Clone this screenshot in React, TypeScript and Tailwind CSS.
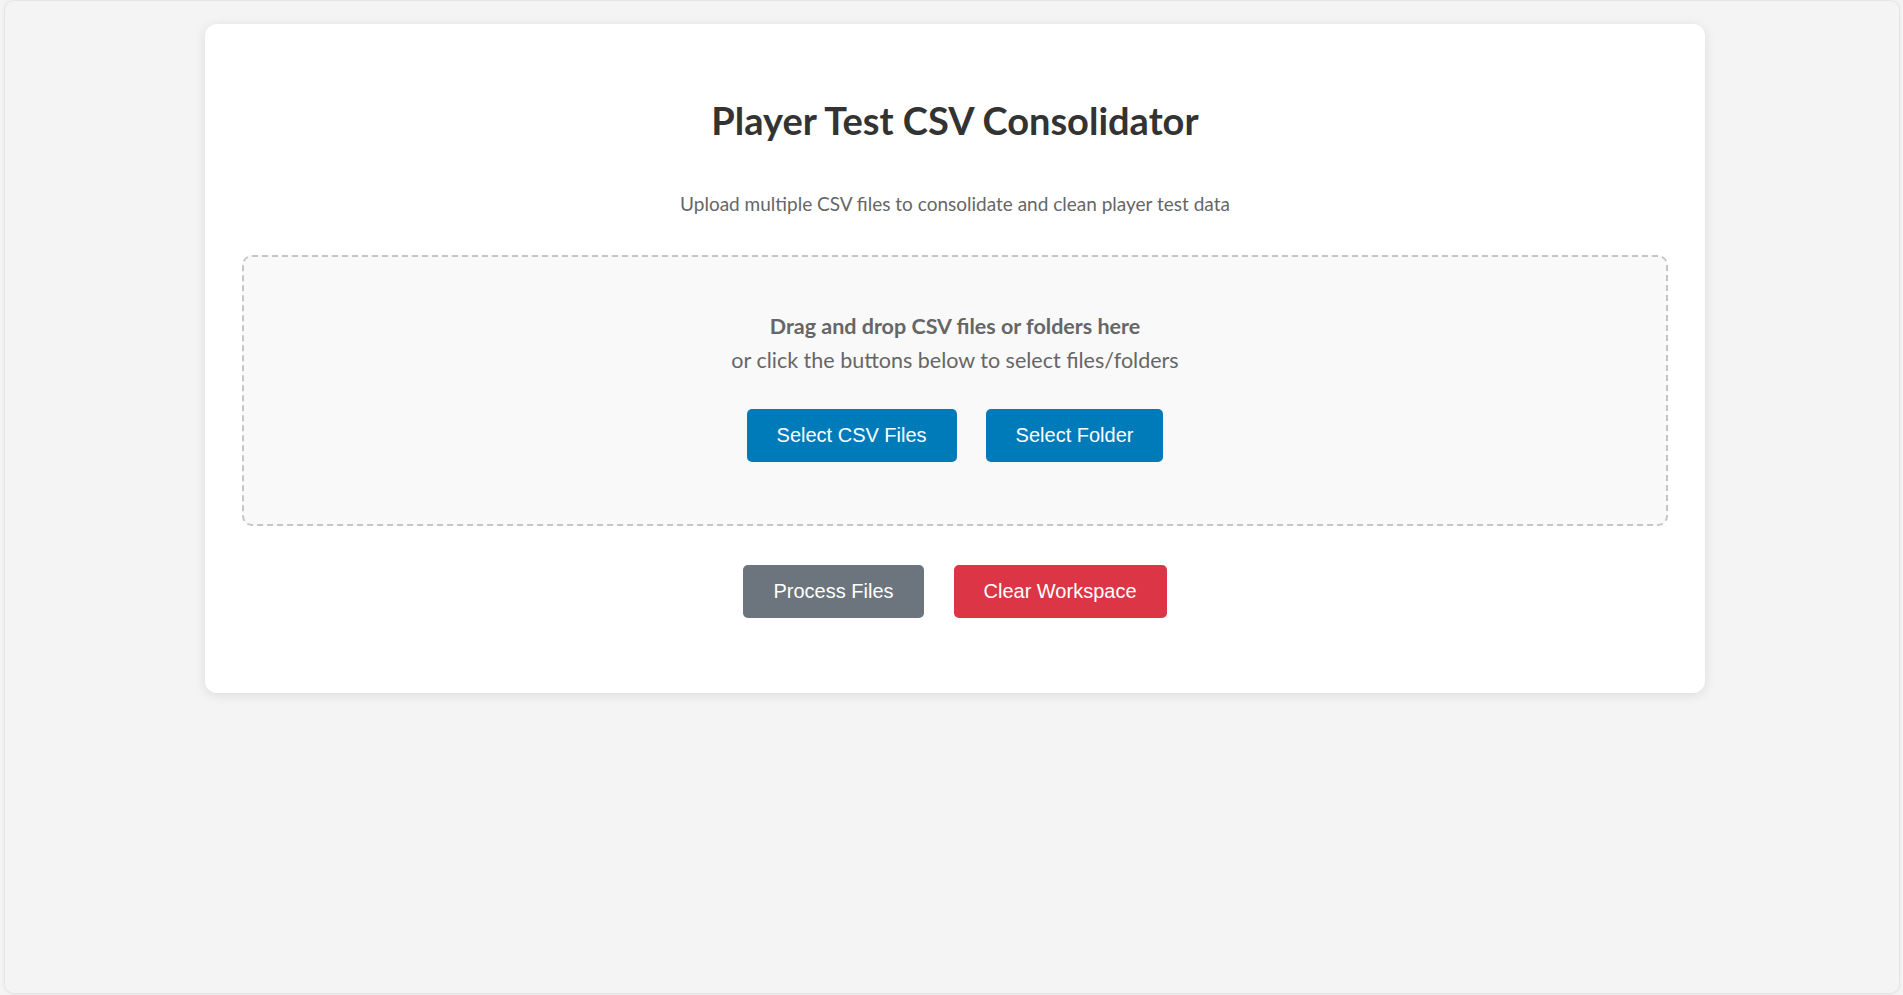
import React from "react";

const heading = { fontFamily: "Lato, 'Open Sans', sans-serif" };

export default function App() {
  return (
    <div className="min-h-screen bg-[#f4f4f4]">
      <div
        className="ml-[4px] mr-[3px] h-[994px] rounded-[10px] border border-[#e6e6e6] bg-[#f4f4f4] pl-[6px] shadow-[0_0_4px_rgba(0,0,0,0.06)]"
        style={heading}
      >
        <div className="mx-auto mt-[23px] w-[1500px] rounded-[12px] bg-white p-[37px] shadow-[0_2px_12px_rgba(0,0,0,0.1)]">
          {/* Header */}
          <h1 className="mt-[37px] text-center text-[38px] font-bold leading-[44px] text-[#333]">
            Player Test CSV Consolidator
          </h1>
          <p className="mt-[50px] text-center text-[19px] leading-[24px] text-[#666]">
            Upload multiple CSV files to consolidate and clean player test data
          </p>

          {/* Drop zone */}
          <div className="mt-[39px] rounded-[10px] border-2 border-dashed border-[#c6c6c6] bg-[#f9f9f9] pb-[62px] pt-[52px] text-center">
            <p className="text-[21.5px] font-bold leading-[34px] text-[#666]">
              Drag and drop CSV files or folders here
            </p>
            <p className="text-[21.5px] leading-[34px] text-[#666]">
              or click the buttons below to select files/folders
            </p>
            <div className="mt-[32px] flex justify-center gap-[29px]">
              <button className="rounded-[5px] bg-[#007bba] px-[30px] py-[15px] text-[20px] leading-[23px] text-white font-['Liberation_Sans',Arial,sans-serif]">
                Select CSV Files
              </button>
              <button className="rounded-[5px] bg-[#007bba] px-[30px] py-[15px] text-[20px] leading-[23px] text-white font-['Liberation_Sans',Arial,sans-serif]">
                Select Folder
              </button>
            </div>
          </div>

          {/* Actions */}
          <div className="mb-[38px] mt-[39px] flex justify-center gap-[30px]">
            <button className="rounded-[5px] bg-[#6c757d] px-[30px] py-[15px] text-[20px] leading-[23px] text-white font-['Liberation_Sans',Arial,sans-serif]">
              Process Files
            </button>
            <button className="rounded-[5px] bg-[#dc3545] px-[30px] py-[15px] text-[20px] leading-[23px] text-white font-['Liberation_Sans',Arial,sans-serif]">
              Clear Workspace
            </button>
          </div>
        </div>
      </div>
    </div>
  );
}
